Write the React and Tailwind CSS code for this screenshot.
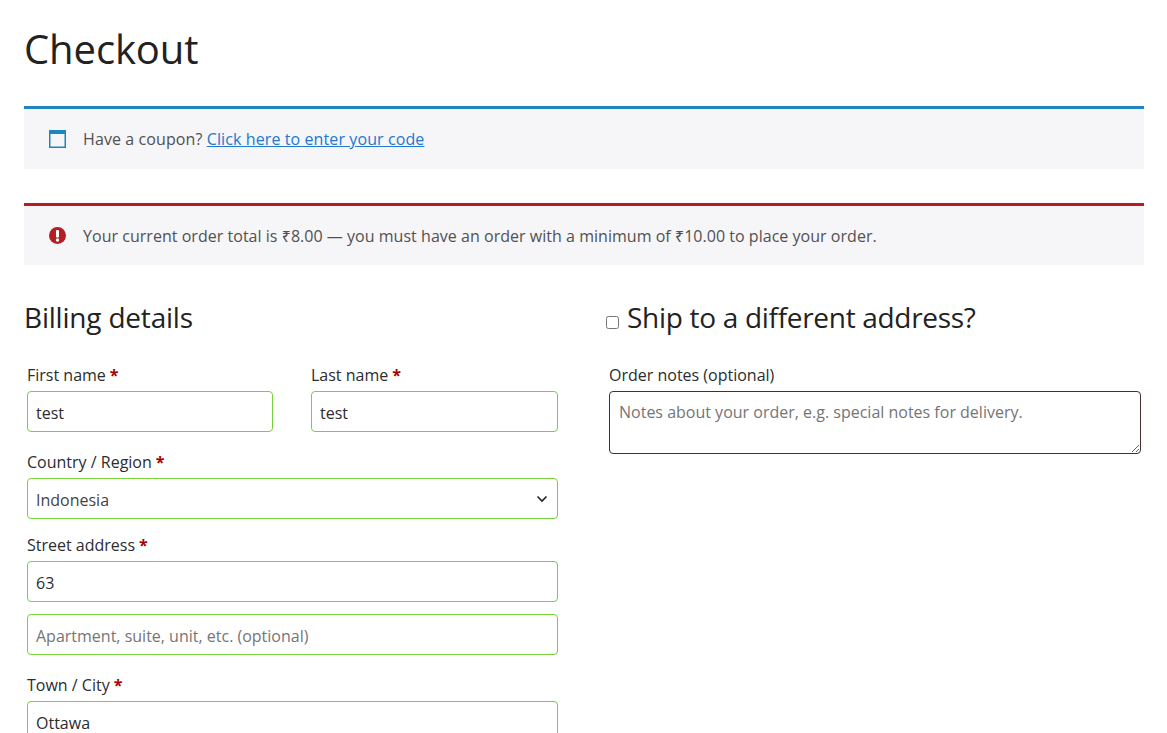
import React from "react";

const font = "[font-family:'Open_Sans','Noto_Sans',sans-serif]";

function Label({ children, required }) {
  return (
    <label className="block text-[16px] leading-[24px] mb-[4px] text-[#2b2d2f]">
      {children}
      {required && <span className="font-bold text-[#a00] ml-[4px]">*</span>}
    </label>
  );
}

function Field({ label, required, value, placeholder, pb = "pb-[15px]" }) {
  return (
    <div className={`px-[3px] pt-[3px] ${pb} w-full`}>
      {label && <Label required={required}>{label}</Label>}
      <input
        readOnly
        defaultValue={value}
        placeholder={placeholder}
        className="block w-full h-[41px] border border-[#7ad03a] rounded-[4px] px-[8px] pt-[2px] text-[16px] text-[#2b2d2f] placeholder:text-[#757575] bg-white outline-none"
      />
    </div>
  );
}

function Notice({ color, icon, h, tracking, children }) {
  return (
    <div className={`flex items-center ${h} border-t-[3px] ${color} bg-[#f6f5f8] pl-[25px] text-[16px] ${tracking} text-[#515151]`}>
      <span className="w-[34px] shrink-0">{icon}</span>
      <span>{children}</span>
    </div>
  );
}

export default function App() {
  return (
    <div className={`h-screen overflow-hidden bg-white pl-[24px] pr-[23px] ${font}`}>
      <h1 className="text-[40px] leading-[48px] pt-[25px] h-[106px] text-[#222] tracking-[-0.1px]">Checkout</h1>
      <Notice
        h="h-[63px]"
        tracking="tracking-[0.1px]"
        color="border-[#1e85be]"
        icon={
          <svg width="17" height="18" viewBox="0 0 17 18" className="block">
            <rect x="0.75" y="0.75" width="15.5" height="16.5" fill="none" stroke="#1e85be" strokeWidth="1.5" />
            <rect x="0" y="0" width="17" height="4" fill="#1e85be" />
          </svg>
        }
      >
        Have a coupon? <a href="#" className="text-[#2279cf] underline">Click here to enter your code</a>
      </Notice>
      <div className="h-[34px]" />
      <Notice
        h="h-[62px]"
        tracking="tracking-[0.03px]"
        color="border-[#b81c23]"
        icon={
          <svg width="17" height="17" viewBox="0 0 17 17" className="block">
            <circle cx="8.5" cy="8.5" r="8.5" fill="#b81c23" />
            <rect x="7" y="3" width="3" height="7.5" rx="1" fill="#fff" />
            <circle cx="8.5" cy="13" r="1.7" fill="#fff" />
          </svg>
        }
      >
        Your current order total is ₹8.00 — you must have an order with a minimum of ₹10.00 to place your order.
      </Notice>

      <div className="flex justify-between pt-[31px]">
        <div className="w-[537px]">
          <h3 className="text-[28px] leading-[42px] h-[64px] text-[#222] tracking-[-0.2px]">Billing details</h3>
          <div className="flex justify-between">
            <div className="w-[252px]"><Field label="First name" required value="test" /></div>
            <div className="w-[253px]"><Field label="Last name" required value="test" /></div>
          </div>
          <div className="px-[3px] pb-[11px] pt-[3px]">
            <Label required>Country / Region</Label>
            <div className="relative">
              <select className="block w-full h-[41px] border border-[#7ad03a] rounded-[4px] px-[8px] pt-[2px] text-[16px] text-[#444] appearance-none bg-white outline-none">
                <option>Indonesia</option>
              </select>
              <svg width="12" height="8" viewBox="0 0 12 8" className="absolute right-[10px] top-[17px]">
                <path d="M1.5 1.5 L6 6 L10.5 1.5" fill="none" stroke="#222" strokeWidth="1.6" />
              </svg>
            </div>
          </div>
          <Field label="Street address" required value="63" pb="pb-[9px]" />
          <Field placeholder="Apartment, suite, unit, etc. (optional)" />
          <Field label="Town / City" required value="Ottawa" />
        </div>

        <div className="w-[538px]">
          <h3 className="text-[28px] leading-[42px] h-[64px] text-[#222] tracking-[-0.3px] flex items-start">
            <input type="checkbox" className="w-[13px] h-[13px] mr-[8px] mt-[20px]" />
            <span>Ship to a different address?</span>
          </h3>
          <div className="px-[3px] pt-[3px]">
            <Label>Order notes (optional)</Label>
            <textarea
              readOnly
              placeholder="Notes about your order, e.g. special notes for delivery."
              className="block w-full h-[63px] border border-[#43302f] rounded-[4px] px-[9px] py-[8px] text-[16px] leading-[24px] placeholder:text-[#757575] bg-white outline-none"
            />
          </div>
        </div>
      </div>
    </div>
  );
}
